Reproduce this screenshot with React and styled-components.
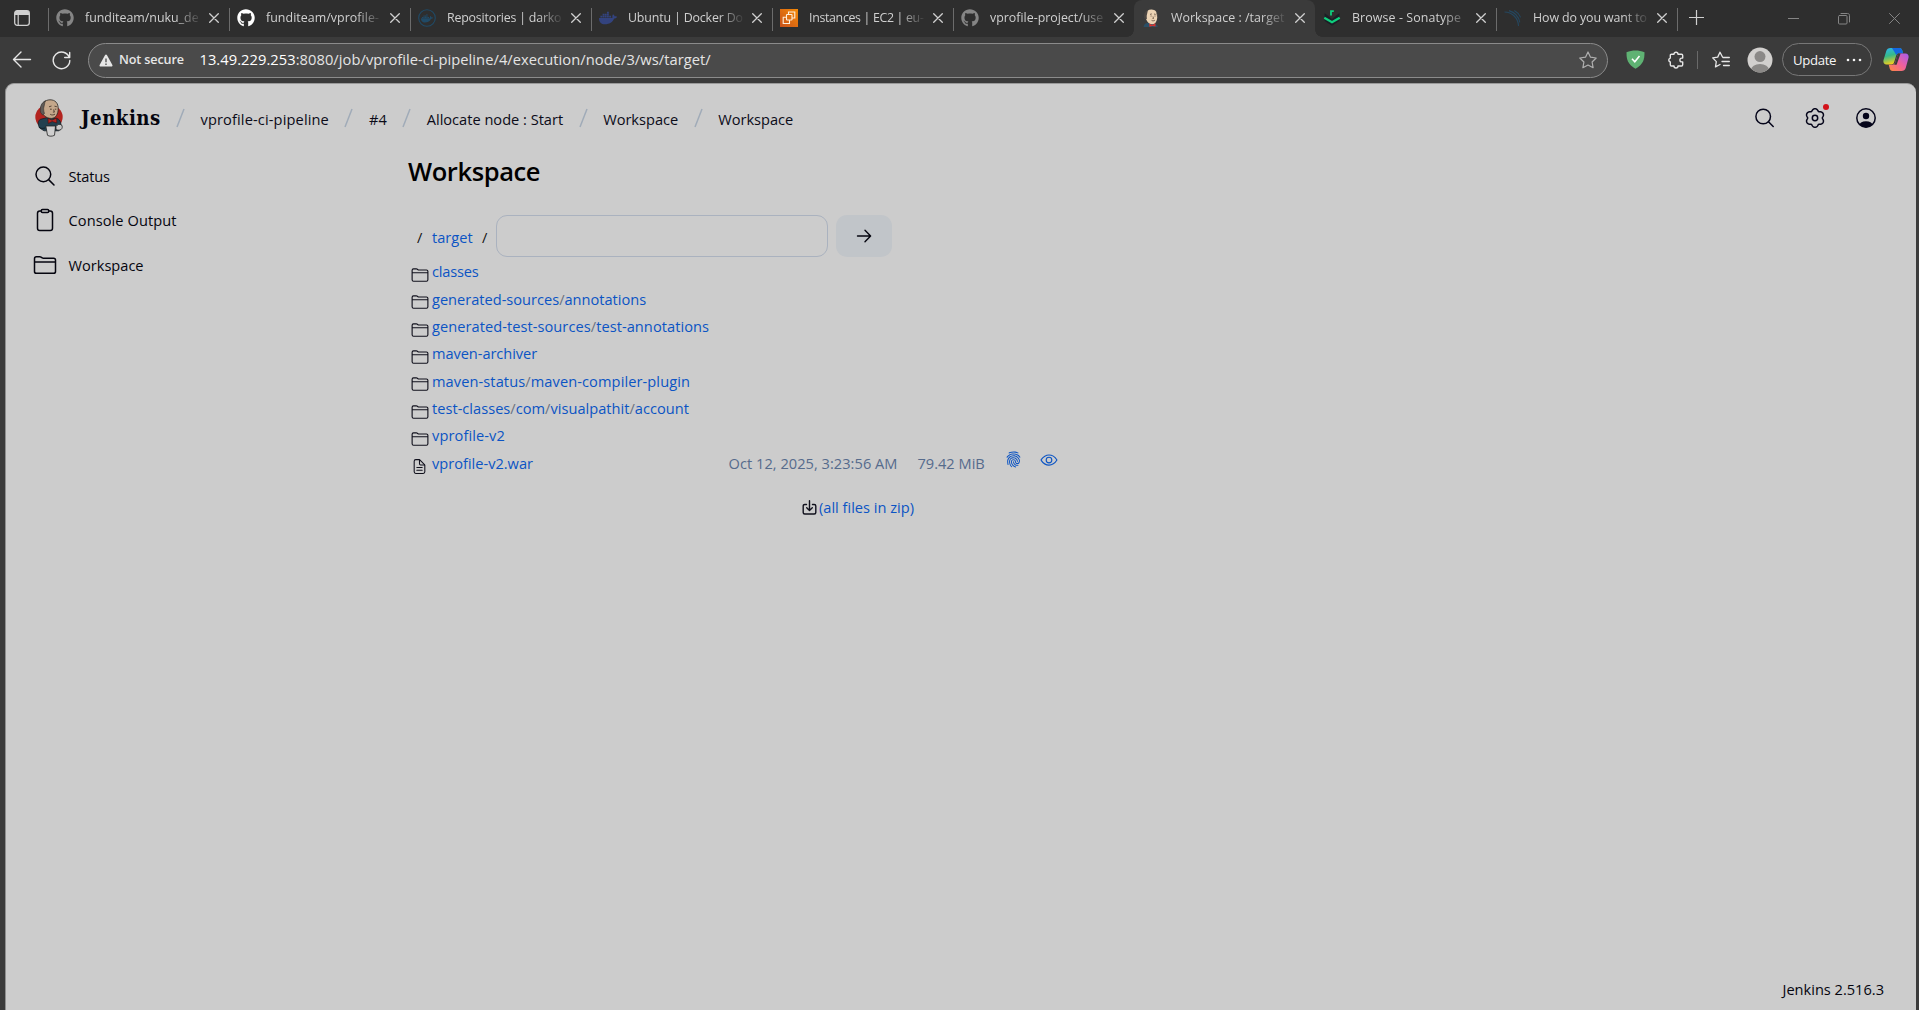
import React from "react";
import styled, { createGlobalStyle } from "styled-components";
import { FaGithub, FaDocker } from "react-icons/fa";
import {
  IoSearchOutline,
  IoClipboardOutline,
  IoFolderOutline,
  IoDocumentTextOutline,
  IoFingerPrint,
  IoEyeOutline,
} from "react-icons/io5";

const Global = createGlobalStyle`
  * { box-sizing: border-box; }
  html, body { margin: 0; height: 100%; overflow: hidden; }
  body {
    font-family: "Open Sans", "Noto Sans", sans-serif;
    font-size: 14.6px;
    background: #3b3b3b;
  }
  svg { display: block; flex: none; }
`;

const Browser = styled.div`
  display: flex;
  flex-direction: column;
  height: 1010px;
  background: #3b3b3b;
`;

/* ---------- tab strip ---------- */

const TabStrip = styled.div`
  display: flex;
  height: 37px;
  background: #2e2e2e;
  color: #d0d0d0;
`;

const TabActions = styled.div`
  width: 48px;
  display: flex;
  align-items: center;
  padding: 0 0 1px 14px;
`;

const TabItem = styled.div`
  position: relative;
  width: 181px;
  flex: none;
  display: flex;
  align-items: center;
  padding: 0 0 1px 8px;
  background: ${(p) => (p.$active ? "#3b3b3b" : "transparent")};
  border-radius: ${(p) => (p.$active ? "8px 8px 0 0" : "0")};
  &::before {
    content: "";
    position: absolute;
    left: 0;
    top: 8px;
    width: 1px;
    height: 23px;
    background: ${(p) => (p.$divider ? "#6c6c6c" : "transparent")};
  }
`;

const TabFlare = styled.span`
  position: absolute;
  bottom: 0;
  width: 7px;
  height: 7px;
  ${(p) => (p.$side === "left" ? "left: -7px;" : "right: -7px;")}
  background: radial-gradient(
    circle at ${(p) => (p.$side === "left" ? "0 0" : "100% 0")},
    transparent 6.5px,
    #3b3b3b 7px
  );
`;

const Favicon = styled.span`
  width: 18px;
  height: 18px;
  display: flex;
  color: ${(p) => p.$color || "inherit"};
`;

const TabTitle = styled.span`
  width: 116px;
  margin-left: 11px;
  white-space: nowrap;
  font-size: 12.4px;
  line-height: 20px;
  letter-spacing: ${(p) => p.$ls || 0}px;
  mask-image: linear-gradient(to right, #000 78%, transparent 101%);
`;

const TabClose = styled.span`
  margin-left: 7.5px;
`;

const NewTab = styled.div`
  position: relative;
  width: 40px;
  display: flex;
  align-items: center;
  padding: 0 0 3px 12px;
  &::before {
    content: "";
    position: absolute;
    left: 0;
    top: 8px;
    width: 1px;
    height: 23px;
    background: #6c6c6c;
  }
`;

const WindowControls = styled.div`
  margin-left: auto;
  display: flex;
  align-items: center;
  gap: 39px;
  padding-right: 19px;
  color: #858585;
`;

/* ---------- toolbar ---------- */

const Toolbar = styled.div`
  display: flex;
  align-items: center;
  height: 46px;
  flex: none;
  padding-left: 12px;
  color: #e6e6e6;
`;

const Reload = styled.span`
  margin-left: 20px;
`;

const Address = styled.div`
  width: 1520px;
  height: 35px;
  flex: none;
  margin-left: 17px;
  border: 1px solid #8b8b8b;
  border-radius: 18px;
  background: #4a4a4a;
  display: flex;
  align-items: center;
  padding: 0 10px;
`;

const NotSecure = styled.span`
  margin-left: 6px;
  font-size: 12.6px;
  font-weight: 600;
  line-height: 20px;
  letter-spacing: -0.12px;
`;

const Url = styled.span`
  margin-left: 15.5px;
  padding-bottom: 2px;
  font-size: 14.7px;
  line-height: 20px;
  color: #fff;
  white-space: nowrap;
  letter-spacing: 0.05px;
`;

const UrlPath = styled.span`
  color: #e4e4e4;
`;

const Push = styled.span`
  margin-left: auto;
  color: #b0b0b0;
`;

const Extensions = styled.div`
  display: flex;
  align-items: center;
  padding: 0 0 1px 18px;
`;

const ExtSlot = styled.span`
  margin-left: ${(p) => p.$gap || 0}px;
`;

const ExtDivider = styled.span`
  width: 1px;
  height: 18px;
  margin-left: 12px;
  background: #6a6a6a;
`;

const UpdateButton = styled.div`
  display: flex;
  align-items: center;
  justify-content: space-between;
  width: 90px;
  height: 33px;
  margin-left: 9px;
  padding: 0 9px 0 10px;
  border: 1px solid #777;
  border-radius: 17px;
  color: #f6f6f6;
`;

const UpdateLabel = styled.span`
  font-size: 13.2px;
  line-height: 20px;
  letter-spacing: -0.35px;
`;

/* ---------- jenkins page ---------- */

const Page = styled.main`
  flex: 1;
  display: flex;
  flex-direction: column;
  margin: 0 3px 0 5px;
  border-top: 1px solid #9a9a9a;
  border-left: 1px solid #8f8f8f;
  border-radius: 9px 9px 0 0;
  background: #ccc;
  color: #0b0b18;
`;

const Header = styled.header`
  display: flex;
  align-items: center;
  height: 68px;
  padding: 0 40px 0 29px;
`;

const Brand = styled.span`
  margin-left: 18px;
  width: 79.5px;
  font-family: "DejaVu Serif Condensed", "DejaVu Serif", serif;
  font-stretch: condensed;
  font-size: 20.2px;
  font-weight: 700;
  line-height: 24px;
  color: #05050f;
  white-space: nowrap;
  letter-spacing: 0.5px;
`;

const Crumb = styled.span`
  line-height: 22px;
  padding-top: 1px;
  white-space: nowrap;
  letter-spacing: ${(p) => p.$ls || 0}px;
`;

const CrumbSlash = styled.span`
  width: 40px;
  display: flex;
  justify-content: center;
`;

const HeaderActions = styled.div`
  display: flex;
  align-items: center;
  gap: 31px;
  margin-left: auto;
  color: #05051a;
`;

const GearSlot = styled.span`
  position: relative;
`;

const AlertDot = styled.span`
  position: absolute;
  right: -4px;
  top: -4px;
  width: 6px;
  height: 6px;
  border-radius: 50%;
  background: #d3121a;
`;

const Body = styled.div`
  flex: 1;
  display: flex;
  padding-top: 1px;
`;

const Sidebar = styled.nav`
  width: 402px;
  padding: 0.7px 0 0 27px;
`;

const SideLink = styled.div`
  display: flex;
  align-items: center;
  gap: 11.5px;
  height: 44.4px;
  color: #05050f;
  svg { width: 24px; height: 24px; }
`;

const SideText = styled.span`
  line-height: 22px;
  white-space: nowrap;
  letter-spacing: ${(p) => p.$ls || 0}px;
`;

const Content = styled.section`
  display: flex;
  flex-direction: column;
`;

const Title = styled.h1`
  margin: 0;
  height: 62px;
  font-size: 25.5px;
  font-weight: 600;
  line-height: 36px;
  color: #000;
  letter-spacing: -0.4px;
`;

const PathBar = styled.div`
  display: flex;
  align-items: center;
  height: 42px;
  padding-left: 9px;
`;

const PathSlash = styled.span`
  width: ${(p) => p.$w}px;
  padding-top: 2px;
  line-height: 22px;
  color: #111;
`;

const Link = styled.a`
  color: #0b54c4;
  line-height: 22px;
  white-space: nowrap;
`;

const PathLink = styled(Link)`
  width: 50px;
  padding-top: 2px;
`;

const PathInput = styled.input`
  width: 332px;
  height: 42px;
  border: 1.5px solid #aab2bf;
  border-radius: 11px;
  background: #ccc;
  outline: none;
`;

const GoButton = styled.button`
  display: flex;
  align-items: center;
  justify-content: center;
  width: 56px;
  height: 42px;
  margin-left: 8px;
  padding: 0;
  border: 0;
  border-radius: 11px;
  background: #c1c5c9;
  color: #05050f;
`;

const FileList = styled.div`
  display: flex;
  flex-direction: column;
  padding-top: 0.7px;
`;

const FileRow = styled.div`
  display: flex;
  align-items: center;
  height: 27.35px;
  color: #10101c;
`;

const FileIcon = styled.span`
  width: 24px;
  padding: 7px 0 0 3px;
`;

const NameCell = styled.span`
  width: 296.5px;
  line-height: 22px;
  white-space: nowrap;
  letter-spacing: ${(p) => p.$ls || 0}px;
`;

const PathSep = styled.span`
  color: #6b7280;
`;

const Meta = styled.span`
  width: ${(p) => p.$w}px;
  line-height: 22px;
  color: #566b8c;
  white-space: nowrap;
  letter-spacing: ${(p) => p.$ls || 0}px;
`;

const RowAction = styled.span`
  width: 35px;
  padding-bottom: 6px;
  color: #0b54c4;
`;

const ZipRow = styled.div`
  display: flex;
  align-items: center;
  gap: 2.5px;
  margin-top: 20px;
  padding-left: 393.5px;
  color: #10101c;
`;

const Footer = styled.footer`
  display: flex;
  justify-content: flex-end;
  padding: 0 32px 10px 0;
  line-height: 22px;
  color: #05050f;
`;

/* ---------- drawings ---------- */

const Line = ({ size = 18, sw = 1.3, children }) => (
  <svg width={size} height={size} viewBox={`0 0 ${size} ${size}`} fill="none" stroke="currentColor" strokeWidth={sw} strokeLinecap="round" strokeLinejoin="round">
    {children}
  </svg>
);

const CloseX = () => (
  <Line size={10} sw={1.3}><path d="M.7.7l8.600 8.600M9.300.7L.7 9.300" /></Line>
);

const JenkinsHead = () => (
  <svg width="18" height="18" viewBox="0 0 18 18">
    <path d="M1.500 18c.3-2.600 2-3.600 4-3.900l5.500.2c2.400.3 4.500 1.500 4.900 3.700z" fill="#2b4f66" />
    <path d="M3.600 5.500C4 2.300 6.500.5 9.600.6c3.700.1 5.800 2.600 5.700 6.600-.1 4.600-1.700 8-5 8C6 15.200 3.200 10.700 3.600 5.500z" fill="#ecd3b4" />
    <path d="M2.400 9.600C1.500 5.600 3 2 6.200.8 5.200 3 5.500 4.300 4.900 5.700c-.3 1-.2 2.700.1 4.300z" fill="#4a4542" />
    <path d="M14.300 3c1.200 1.200 1.700 3 1.500 5.200l-.8-1z" fill="#4a4542" />
    <path d="M8 5.400l1.800-.5M12 5l1.700.4M8.600 7h1M12.500 7h1M11 7.500l.5 2h-1M9.600 11.400c1.100.6 2.400.5 3.300-.2" stroke="#5a4638" strokeWidth=".8" fill="none" />
    <path d="M7.200 14.600l3 1.300 3.200-1.600.2 3.200-3.200-.6-3 .9z" fill="#d5342f" />
  </svg>
);

const JenkinsLogo = () => (
  <svg width="28" height="38" viewBox="0 0 28 38">
    <ellipse cx="14" cy="18" rx="13.700" ry="12.500" fill="#b3241f" />
    <path d="M4.600 29C2.400 25.500 3 21.500 5.500 20.300l6-1.500 9 .4c4.500.6 5.700 4 5.500 8.600l-2 4H9z" fill="#23404f" stroke="#10191f" strokeWidth=".7" />
    <path d="M6.200 10C6.200 4.500 9.800.9 15 .8c5.200-.1 8.400 3.400 8.200 9.200-.1 5-2.200 9-6.500 9.400C11 19.600 6.500 15.500 6.200 10z" fill="#c4a78b" stroke="#2a2724" strokeWidth=".8" />
    <path d="M5.600 13.500C4.500 8.500 6.200 3.500 10.500 1.700 9.300 4.200 9.700 6 8.900 8c-.5 1.500-.2 4 .6 6.500L7.600 16z" fill="#5f5b57" stroke="#2a2724" strokeWidth=".5" />
    <path d="M14 7.800l2.500-.8M19.500 7.200l2.300.5M15 10.200h1.800M19.800 10.200h1.500M18.600 10.500l.8 2.600h-1.500M15.200 15.300c1.500 1 3.400.8 4.800-.2" stroke="#3a2c22" strokeWidth=".8" fill="none" />
    <path d="M13 19.300l4 1.900 4.600-2.200.2 5-4.600-1.500-4 1.900z" fill="#b3241f" stroke="#3a0d0c" strokeWidth=".5" />
    <path d="M10.800 27h9.700l-1 9.300c-2.300 1.200-5 1.200-7 0z" fill="#cfcfcf" stroke="#222" strokeWidth=".8" />
    <path d="M21 27.500c1.200-2 3.600-2.800 5.500-1.600 1.300 1.500.8 3.600-.5 4.700-1.800.8-3.600.6-5 0z" fill="#c9c9c9" stroke="#222" strokeWidth=".8" />
    <path d="M10 29c-3 .8-5 .3-6-1" stroke="#10191f" strokeWidth=".8" fill="none" />
  </svg>
);

const Ec2Icon = () => (
  <svg width="18" height="18" viewBox="0 0 18 18">
    <defs>
      <linearGradient id="ec2" x1="0" y1="1" x2="1" y2="0">
        <stop offset="0" stopColor="#c8511b" />
        <stop offset="1" stopColor="#f58a07" />
      </linearGradient>
    </defs>
    <rect width="18" height="18" fill="url(#ec2)" />
    <g fill="none" stroke="#fff0dc" strokeWidth="1.100">
      <rect x="6.500" y="5.500" width="5.500" height="5.500" rx=".6" />
      <path d="M8.500 5.500V3h6.300v6H12M6.500 8.200H3.200v6.300h6.300V11" />
    </g>
  </svg>
);

const DockerHubIcon = () => (
  <svg width="18" height="18" viewBox="0 0 18 18">
    <circle cx="9" cy="9" r="8.300" fill="none" stroke="#204a66" strokeWidth="1.100" />
    <g transform="translate(3 3.400)"><FaDocker size={12} color="#204a66" /></g>
  </svg>
);

const NexusIcon = () => (
  <svg width="18" height="18" viewBox="0 0 18 18">
    <path d="M1.600 4v8L9 16.700 16.400 12V4L9 10z" fill="#1b1f26" />
    <path d="M1.300 8.800L9 13.300l7.700-4.500" fill="none" stroke="#0fce7c" strokeWidth="2.200" />
    <path d="M8 6.500V2.200h2.800" fill="none" stroke="#0fce7c" strokeWidth="1.800" />
  </svg>
);

const SonarIcon = () => (
  <svg width="18" height="18" viewBox="0 0 18 18" fill="none" stroke="#25475f" strokeWidth="1.100">
    <path d="M.5 3C8 3 14.200 9 14.500 17M5 1.600c5.500 1.600 9.700 6 10.800 11.700M10.300 1.500c2.900 1.500 5 3.900 6.300 6.900" />
  </svg>
);

const CopilotIcon = () => (
  <svg width="26" height="25" viewBox="0 0 26 25">
    <defs>
      <linearGradient id="cpa" x1="0" y1="0" x2=".3" y2="1">
        <stop offset="0" stopColor="#2fb5f5" />
        <stop offset=".5" stopColor="#35b98a" />
        <stop offset="1" stopColor="#f2cf1c" />
      </linearGradient>
      <linearGradient id="cpb" x1="1" y1="0" x2="0" y2="1">
        <stop offset="0" stopColor="#a45cf0" />
        <stop offset=".5" stopColor="#f0609a" />
        <stop offset="1" stopColor="#ff8a3c" />
      </linearGradient>
    </defs>
    <path d="M7.500 1h9c1.600 0 2.300 1 2.800 2.500l.8 2.700h-4c-1.700 0-2.500.9-3 2.500l-2 6.600c-.5 1.500-1.300 2.200-2.700 2.200H3.500C.8 17.500-.1 15.300.6 12.800L3.200 4.300C3.900 2 5.300 1 7.500 1z" fill="url(#cpa)" />
    <path d="M9 1h7.500c1.600 0 2.300 1 2.800 2.500l.8 2.700h-4c-1.500 0-2.300.7-2.800 2L11.500 5z" fill="#1468e0" />
    <path d="M18.500 24h-9c-1.600 0-2.300-1-2.800-2.500l-1-3.800h3.600c1.700 0 2.500-.8 3-2.400l2-6.600c.5-1.500 1.300-2.200 2.700-2.200h5.500c2.700 0 3.600 2.200 2.900 4.700l-2.600 9.500C22.100 23 20.700 24 18.500 24z" fill="url(#cpb)" />
    <path d="M15 6.500h2.600l-4 11.200H11c.7-.5 1-1.200 1.300-2.400l2-6.600c.2-.9.400-1.600.7-2.200z" fill="#3b3b3b" />
  </svg>
);

/* six rounded lobes, one pointing straight up */
const gearPath = (() => {
  const pts = [];
  for (let i = 0; i < 120; i += 1) {
    const a = (i / 120) * Math.PI * 2;
    const r = 8.45 + 0.95 * Math.cos(6 * a) - 0.15 * Math.cos(12 * a);
    pts.push(`${(10 + r * Math.sin(a)).toFixed(2)} ${(10 - r * Math.cos(a)).toFixed(2)}`);
  }
  return `M${pts.join("L")}Z`;
})();

const Slash = () => (
  <svg width="9" height="20" viewBox="0 0 9 20"><path d="M1 19L8 1" stroke="#a0abb8" strokeWidth="1.500" /></svg>
);

/* ---------- data ---------- */

const tabs = [
  { title: "funditeam/nuku_de", icon: <FaGithub size={18} />, color: "#858585", divider: true },
  { title: "funditeam/vprofile-", icon: <FaGithub size={18} />, color: "#fff", divider: true, ls: 0.05 },
  { title: "Repositories | darko", icon: <DockerHubIcon />, divider: true, ls: -0.2 },
  { title: "Ubuntu | Docker Do", icon: <FaDocker size={18} />, color: "#33437e", divider: true, ls: -0.16 },
  { title: "Instances | EC2 | eu-", icon: <Ec2Icon />, divider: true, ls: -0.33 },
  { title: "vprofile-project/use", icon: <FaGithub size={18} />, color: "#858585", divider: true },
  { title: "Workspace : /target", icon: <JenkinsHead />, active: true, ls: 0.05 },
  { title: "Browse - Sonatype", icon: <NexusIcon />, ls: 0.1 },
  { title: "How do you want to", icon: <SonarIcon />, divider: true, ls: -0.1 },
];

const crumbs = [
  { text: "vprofile-ci-pipeline", ls: 0.135 },
  { text: "#4" },
  { text: "Allocate node : Start" },
  { text: "Workspace" },
  { text: "Workspace" },
];

const sideLinks = [
  { text: "Status", icon: <IoSearchOutline />, ls: -0.2 },
  { text: "Console Output", icon: <IoClipboardOutline />, ls: 0.08 },
  { text: "Workspace", icon: <IoFolderOutline /> },
];

const folders = [
  { path: ["classes"], ls: -0.2 },
  { path: ["generated-sources", "annotations"] },
  { path: ["generated-test-sources", "test-annotations"], ls: 0.06 },
  { path: ["maven-archiver"], ls: -0.06 },
  { path: ["maven-status", "maven-compiler-plugin"], ls: 0.095 },
  { path: ["test-classes", "com", "visualpathit", "account"], ls: 0.02 },
  { path: ["vprofile-v2"], ls: 0.11 },
];

export default function App() {
  return (
    <Browser>
      <Global />
      <TabStrip>
        <TabActions>
          <svg width="16" height="16" viewBox="0 0 16 16">
            <rect x=".7" y=".7" width="14.600" height="14.600" rx="2.500" fill="none" stroke="#cfcfcf" strokeWidth="1.300" />
            <path d="M1 2.500C1 1.500 1.800 1 3 1h10c1.200 0 2 .5 2 1.500V5H1z" fill="#cfcfcf" />
            <path d="M4.200 5v10" stroke="#cfcfcf" strokeWidth="1.200" />
          </svg>
        </TabActions>
        {tabs.map((t) => (
          <TabItem key={t.title} $active={t.active} $divider={t.divider}>
            {t.active && <TabFlare $side="left" />}
            {t.active && <TabFlare $side="right" />}
            <Favicon $color={t.color}>{t.icon}</Favicon>
            <TabTitle $ls={t.ls}>{t.title}</TabTitle>
            <TabClose><CloseX /></TabClose>
          </TabItem>
        ))}
        <NewTab><Line size={15} sw={1.2}><path d="M7.500 0v15M0 7.500h15" /></Line></NewTab>
        <WindowControls>
          <Line size={11} sw={1}><path d="M0 5.500h11" /></Line>
          <Line size={12} sw={1}><rect x=".5" y="2.500" width="8.500" height="8.500" rx="1" /><path d="M3 .5h6.500c1.300 0 2 .7 2 2V9" /></Line>
          <Line size={11} sw={1}><path d="M.5.5l10 10M10.500.5l-10 10" /></Line>
        </WindowControls>
      </TabStrip>

      <Toolbar>
        <Line size={20} sw={1.4}><path d="M18.500 9.500H1.500M9 2L1.500 9.500 9 17" /></Line>
        <Reload><Line size={19} sw={1.4}><path d="M17.300 6.500A8.300 8.300 0 1 0 17.800 9.500M17.700 1.500v5h-5" /></Line></Reload>
        <Address>
          <svg width="14" height="13" viewBox="0 0 14 13">
            <path d="M6.100.9c.4-.7 1.400-.7 1.800 0l5.500 10c.4.700-.1 1.600-.9 1.600h-11c-.8 0-1.300-.9-.9-1.600z" fill="#e6e6e6" />
            <path d="M7 4.500v3.700M7 9.600v1.300" stroke="#4a4a4a" strokeWidth="1.300" />
          </svg>
          <NotSecure>Not secure</NotSecure>
          <Url>13.49.229.253<UrlPath>:8080/job/vprofile-ci-pipeline/4/execution/node/3/ws/target/</UrlPath></Url>
          <Push><Line size={18} sw={1.2}><path d="M9 1l2.500 5.200 5.700.8-4.100 4 1 5.700L9 14l-5.100 2.700 1-5.700L.8 7l5.700-.8z" /></Line></Push>
        </Address>
        <Extensions>
          <svg width="19" height="19" viewBox="0 0 19 19">
            <path d="M9.500.4C6.500.4 3.300 1 .5 2.300c0 7 .9 12 9 16.400 8.100-4.400 9-9.400 9-16.400C15.700 1 12.500.4 9.500.4z" fill="#5fb273" />
            <path d="M6 8.800l2.800 3L13.500 6" fill="none" stroke="#fff" strokeWidth="1.600" />
          </svg>
          <ExtSlot $gap={22}>
            <Line size={18} sw={1.4}><path d="M7 3.200a2 2 0 0 1 4 0h3.500c.7 0 1.200.5 1.200 1.200v2.700h-.9a1.900 1.900 0 0 0 0 3.800h.9v2.900c0 .7-.5 1.200-1.200 1.200H11a2 2 0 0 1-4 0H4.500c-.7 0-1.200-.5-1.200-1.200V11a2 2 0 0 1 0-3.900V4.400c0-.7.5-1.200 1.200-1.200z" /></Line>
          </ExtSlot>
          <ExtDivider />
          <ExtSlot $gap={14}>
            <Line size={18} sw={1.3}><path d="M10.500 6L8 1.200 5.700 6.100l-5 .8 3.600 3.700-.8 5.300L8 13.500M11 6.500h6.300M10 10.500h7.300M11.500 14.500h5.800" /></Line>
          </ExtSlot>
          <ExtSlot $gap={17}>
            <svg width="26" height="26" viewBox="0 0 26 26">
              <defs><clipPath id="av"><circle cx="13" cy="13" r="12.500" /></clipPath></defs>
              <circle cx="13" cy="13" r="12.500" fill="#d2d0ce" />
              <g clipPath="url(#av)" fill="#8b8987"><circle cx="13" cy="9.600" r="5.500" /><ellipse cx="13" cy="23" rx="9" ry="6" /></g>
            </svg>
          </ExtSlot>
          <UpdateButton>
            <UpdateLabel>Update</UpdateLabel>
            <svg width="16" height="4" viewBox="0 0 16 4" fill="currentColor"><circle cx="2" cy="2" r="1.300" /><circle cx="8" cy="2" r="1.300" /><circle cx="14" cy="2" r="1.300" /></svg>
          </UpdateButton>
          <ExtSlot $gap={11}><CopilotIcon /></ExtSlot>
        </Extensions>
      </Toolbar>

      <Page>
        <Header>
          <JenkinsLogo />
          <Brand>Jenkins</Brand>
          {crumbs.map((c, i) => (
            <React.Fragment key={i}>
              <CrumbSlash><Slash /></CrumbSlash>
              <Crumb $ls={c.ls}>{c.text}</Crumb>
            </React.Fragment>
          ))}
          <HeaderActions>
            <Line size={20} sw={1.5}><circle cx="9.200" cy="8.500" r="7.300" /><path d="M14.500 13.800L19.200 18.500" /></Line>
            <GearSlot>
              <Line size={20} sw={1.5}><path d={gearPath} /><circle cx="10" cy="10" r="2.700" /></Line>
              <AlertDot />
            </GearSlot>
            <svg width="20" height="20" viewBox="0 0 20 20">
              <defs><clipPath id="me"><circle cx="10" cy="10" r="9.200" /></clipPath></defs>
              <circle cx="10" cy="10" r="9.200" fill="none" stroke="currentColor" strokeWidth="1.500" />
              <g clipPath="url(#me)" fill="currentColor"><circle cx="10" cy="8" r="3.200" /><ellipse cx="10" cy="18" rx="7" ry="4.800" /></g>
            </svg>
          </HeaderActions>
        </Header>

        <Body>
          <Sidebar>
            {sideLinks.map((s) => (
              <SideLink key={s.text}>
                {s.icon}
                <SideText $ls={s.ls}>{s.text}</SideText>
              </SideLink>
            ))}
          </Sidebar>
          <Content>
            <Title>Workspace</Title>
            <PathBar>
              <PathSlash $w={15}>/</PathSlash>
              <PathLink>target</PathLink>
              <PathSlash $w={14}>/</PathSlash>
              <PathInput />
              <GoButton>
                <Line size={16} sw={1.4}><path d="M1.500 8h13M9 2.300L14.600 8 9 13.700" /></Line>
              </GoButton>
            </PathBar>
            <FileList>
              {folders.map((f) => (
                <FileRow key={f.path.join("/")}>
                  <FileIcon><IoFolderOutline size={18} /></FileIcon>
                  <NameCell $ls={f.ls}>
                    {f.path.map((seg, i) => (
                      <React.Fragment key={seg}>
                        {i > 0 && <PathSep>/</PathSep>}
                        <Link>{seg}</Link>
                      </React.Fragment>
                    ))}
                  </NameCell>
                </FileRow>
              ))}
              <FileRow>
                <FileIcon><IoDocumentTextOutline size={17} /></FileIcon>
                <NameCell><Link>vprofile-v2.war</Link></NameCell>
                <Meta $w={189} $ls={0.04}>Oct 12, 2025, 3:23:56 AM</Meta>
                <Meta $w={87.5}>79.42 MiB</Meta>
                <RowAction><IoFingerPrint size={17} /></RowAction>
                <RowAction><IoEyeOutline size={18} /></RowAction>
              </FileRow>
            </FileList>
            <ZipRow>
              <Line size={15} sw={1.4}><path d="M4.500 4.500H2.800C1.800 4.500 1.200 5 1.200 6v6.500c0 1 .6 1.500 1.600 1.500h9.400c1 0 1.600-.5 1.600-1.500V6c0-1-.6-1.500-1.600-1.500h-1.700M7.500.7v9.500M4.700 7.700l2.800 2.700 2.800-2.700" /></Line>
              <Link>(all files in zip)</Link>
            </ZipRow>
          </Content>
        </Body>
        <Footer>Jenkins 2.516.3</Footer>
      </Page>
    </Browser>
  );
}
